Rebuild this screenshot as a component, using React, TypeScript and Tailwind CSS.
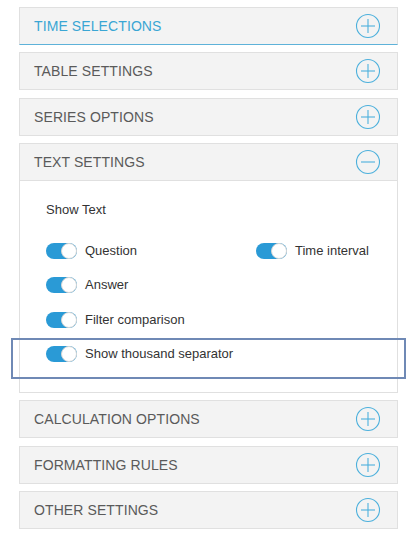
import React from 'react';

const font = { fontFamily: '"Liberation Sans", Arial, sans-serif' };

function CircleIcon({ open }: { open?: boolean }) {
  return (
    <svg width="26" height="26" viewBox="0 0 26 26" fill="none">
      <circle cx="13" cy="13" r="11.5" stroke="#4cb0dc" strokeWidth="1.1" />
      <line x1="6" y1="13" x2="20" y2="13" stroke="#4cb0dc" strokeWidth="1.1" />
      {!open && <line x1="13" y1="6" x2="13" y2="20" stroke="#4cb0dc" strokeWidth="1.1" />}
    </svg>
  );
}

function Header({ title, active, open, extra }: { title: string; active?: boolean; open?: boolean; extra?: string }) {
  return (
    <div
      className={`h-[38px] flex items-center justify-between pl-[14px] pr-[16px] bg-[#f3f3f3] border border-[#e0e0e0] ${
        active ? 'border-b-[#5eb2d9]' : ''
      } ${extra ?? ''}`}
    >
      <span className={`text-[14px] tracking-[0.1px] ${active ? 'text-[#3aa6d4]' : 'text-[#5a5a5a]'}`}>{title}</span>
      <CircleIcon open={open} />
    </div>
  );
}

function Toggle() {
  return (
    <div className="relative w-[31px] h-[16px] rounded-full bg-[#2a9ad6] shrink-0">
      <div className="absolute right-0 top-0 w-[16px] h-[16px] rounded-full bg-white border border-[#d6d6d6]" />
    </div>
  );
}

function ToggleRow({ label, extra }: { label: string; extra?: string }) {
  return (
    <div className={`flex items-center gap-[8px] h-[16px] ${extra ?? ''}`}>
      <Toggle />
      <span className="text-[13px] leading-[16px] text-[#333]">{label}</span>
    </div>
  );
}

export default function App() {
  return (
    <div className="w-[413px] h-[541px] bg-white pt-[7px] pl-[19px] pr-[15px]" style={font}>
      <div className="flex flex-col gap-[7px]">
        <Header title="TIME SELECTIONS" active />
        <Header title="TABLE SETTINGS" />
        <Header title="SERIES OPTIONS" extra="mt-[1px]" />

        <div>
          <Header title="TEXT SETTINGS" open />
          <div className="h-[212px] border border-t-0 border-[#e0e0e0] bg-white pl-[26px] pt-[21px]">
            <div className="text-[13px] text-[#333] leading-[16px]">Show Text</div>
            <div className="mt-[25px] flex flex-col gap-[18px]">
              <div className="flex">
                <div className="w-[210px]">
                  <ToggleRow label="Question" />
                </div>
                <ToggleRow label="Time interval" />
              </div>
              <ToggleRow label="Answer" />
              <ToggleRow label="Filter comparison" extra="mt-[1px]" />
              <div className="relative">
                <ToggleRow label="Show thousand separator" />
                <div className="absolute left-[-35px] right-[-9px] top-[-8px] h-[41px] border-[2px] border-[#6f89b5]" />
              </div>
            </div>
          </div>
        </div>

        <Header title="CALCULATION OPTIONS" />
        <Header title="FORMATTING RULES" extra="mt-[1px]" />
        <Header title="OTHER SETTINGS" />
      </div>
    </div>
  );
}
